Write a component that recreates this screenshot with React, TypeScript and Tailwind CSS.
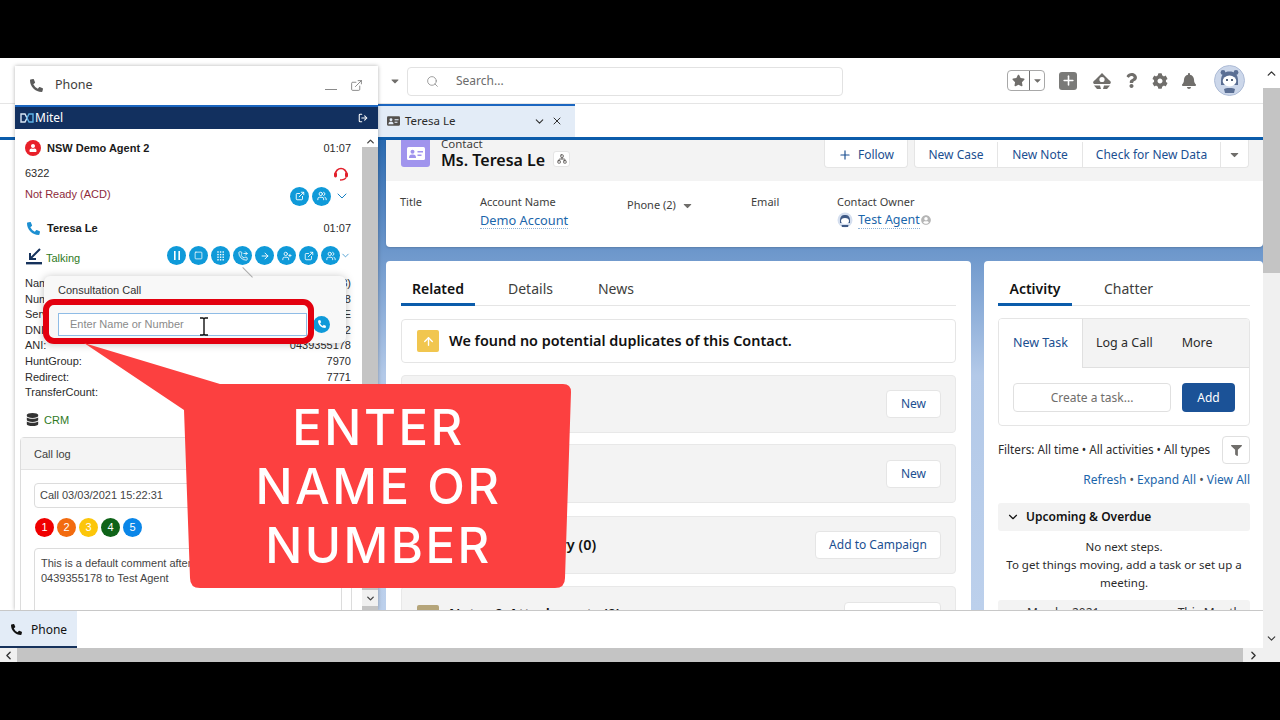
import React from 'react';
import {
  ChevronDown, ChevronUp, ChevronLeft, ChevronRight, ExternalLink, LogOut, Search, X, Plus,
  Square, PhoneForwarded, ArrowRight, UserPlus, Users, Network,
} from 'lucide-react';
import { FaPhoneAlt, FaDatabase, FaStar, FaQuestion, FaCog, FaBell, FaFilter, FaCaretDown, FaUserCircle, FaUser } from 'react-icons/fa';

const sf = "font-['Noto_Sans',sans-serif]";
const ar = "font-['Liberation_Sans',Arial,sans-serif]";

function RoundBtn({ children, size = 'w-[19px] h-[19px]' }: { children: React.ReactNode; size?: string }) {
  return <div className={`${size} rounded-full bg-[#0f9ad9] text-white flex items-center justify-center shrink-0`}>{children}</div>;
}

function PauseBars() {
  return (
    <svg width="8" height="9" viewBox="0 0 8 9" fill="#fff">
      <rect x="1" y="0" width="1.6" height="9" />
      <rect x="5.4" y="0" width="1.6" height="9" />
    </svg>
  );
}

function DialPad() {
  const dots: [number, number][] = [];
  for (let r = 0; r < 4; r++) for (let c = 0; c < 3; c++) dots.push([c * 2.6 + 1, r * 2.6 + 1]);
  return (
    <svg width="8" height="10" viewBox="0 0 8 10" fill="#fff">
      {dots.map(([x, y]) => <rect key={`${x}-${y}`} x={x - 0.7} y={y - 0.7} width="1.4" height="1.4" />)}
    </svg>
  );
}

function Headset() {
  return (
    <svg width="16" height="16" viewBox="0 0 16 16" fill="none">
      <path d="M2.5 9 A5.5 5.5 0 0 1 13.5 9" stroke="#e2202c" strokeWidth="1.6" />
      <rect x="1" y="7.5" width="3" height="5" rx="1.4" fill="#e2202c" />
      <rect x="12" y="7.5" width="3" height="5" rx="1.4" fill="#e2202c" />
      <path d="M13 12.5 C12 14.5 9.5 15 7 15" stroke="#e2202c" strokeWidth="1.5" />
    </svg>
  );
}

function MitelLogo() {
  return (
    <svg width="14" height="10" viewBox="0 0 14 10" fill="none">
      <path d="M1 1 L5 1 L7 5 L5 9 L1 9 Z" stroke="#d8e6f5" strokeWidth="1.4" />
      <path d="M13 1 L9 1 L7 5 L9 9 L13 9 Z" stroke="#5fb2e6" strokeWidth="1.4" />
    </svg>
  );
}

function IdCard({ w, h, bg, fg }: { w: number; h: number; bg: string; fg: string }) {
  return (
    <svg width={w} height={h} viewBox="0 0 18 13">
      <rect x="0" y="0" width="18" height="13" rx="1.5" fill={bg} />
      <circle cx="5.5" cy="4.8" r="2" fill={fg} />
      <path d="M2 11 C2 8 3.5 7.5 5.5 7.5 C7.5 7.5 9 8 9 11 Z" fill={fg} />
      <rect x="10.5" y="4" width="5.5" height="1.5" fill={fg} />
      <rect x="10.5" y="7.5" width="4" height="1.5" fill={fg} />
    </svg>
  );
}

function Avatar() {
  return (
    <svg width="31" height="31" viewBox="0 0 31 31">
      <circle cx="15.5" cy="15.5" r="15" fill="#ccd7ea" stroke="#aebcd6" />
      <circle cx="9" cy="7.5" r="2.4" fill="#5b6f94" />
      <circle cx="22" cy="7.5" r="2.4" fill="#5b6f94" />
      <path d="M7 16 C7 9 10.5 6.5 15.5 6.5 C20.5 6.5 24 9 24 16 L24 20 L7 20 Z" fill="#5b6f94" />
      <ellipse cx="15.5" cy="16" rx="6.8" ry="5.4" fill="#fff" />
      <circle cx="13" cy="15" r="1" fill="#1c2f4f" />
      <circle cx="18" cy="15" r="1" fill="#1c2f4f" />
      <path d="M10 24 C11 22.5 20 22.5 21 24 L20 28 L11 28 Z" fill="#5b6f94" />
    </svg>
  );
}

function Trailhead() {
  return (
    <svg width="20" height="18" viewBox="0 0 20 18" fill="#706e6b">
      <path d="M10 1 L17 8 C19 9 19.5 11 18 12 L2 12 C0.5 11 1 9 3 8 Z" />
      <circle cx="10" cy="7.5" r="2.6" fill="#fff" />
      <path d="M2 13.5 L8 13.5 L9 17 L5 17 Z M18 13.5 L12 13.5 L11 17 L15 17 Z" />
    </svg>
  );
}

function SmallAvatar() {
  return (
    <svg width="16" height="16" viewBox="0 0 16 16">
      <circle cx="8" cy="8" r="7.5" fill="#d5dfef" />
      <path d="M3 9 C3 4 5 3 8 3 C11 3 13 4 13 9 L13 11 L3 11 Z" fill="#3f5a86" />
      <ellipse cx="8" cy="9" rx="4" ry="3" fill="#fff" />
      <path d="M4.5 13 L11.5 13 L11 15 L5 15 Z" fill="#3f5a86" />
    </svg>
  );
}

function TalkingIcon() {
  return (
    <svg width="18" height="18" viewBox="0 0 18 18" fill="none">
      <path d="M15 1 L5 11 M5 5 L5 11 L11 11" stroke="#16325c" strokeWidth="2" />
      <rect x="1" y="14" width="16" height="2.4" fill="#16325c" />
    </svg>
  );
}

function PhonePanel() {
  const info = [
    ['Name:', 'Teresa Le (0439355178)'],
    ['Number:', '0439355178'],
    ['Service:', 'SERVICE'],
    ['DNIS:', '6322'],
    ['ANI:', '0439355178'],
    ['HuntGroup:', '7970'],
    ['Redirect:', '7771'],
    ['TransferCount:', ''],
  ];
  const ratings = [
    ['1', 'bg-[#f00000]'],
    ['2', 'bg-[#f26b0f]'],
    ['3', 'bg-[#fcc60a]'],
    ['4', 'bg-[#0f6318]'],
    ['5', 'bg-[#0a86e8]'],
  ];
  return (
    <div className={`absolute left-[15px] top-[8px] bottom-0 w-[363px] bg-white shadow-[0_0_4px_rgba(0,0,0,0.3)] flex flex-col ${ar}`}>
      <div className="h-[39px] shrink-0 flex items-center pl-[15px] pr-[15px]">
        <FaPhoneAlt className="text-[#5c5c5c] text-[13px]" />
        <span className={`ml-[12px] text-[12.5px] text-[#3e3e3c] ${sf}`}>Phone</span>
        <div className="ml-auto w-[12px] h-[1px] bg-[#8a8a8a] mt-[8px]" />
        <ExternalLink className="ml-[13px] text-[#5c5c5c]" size={13} strokeWidth={1.3} />
      </div>
      <div className="h-[24px] shrink-0 bg-[#12305f] border-t-2 border-[#1b66c0] flex items-center pl-[5px] pr-[10px]">
        <MitelLogo />
        <span className={`ml-[1px] text-white text-[12px] ${sf}`}>Mitel</span>
        <LogOut className="ml-auto text-white" size={10} strokeWidth={2.5} />
      </div>
      <div className="relative flex-1 flex min-h-0">
        <div className="flex-1 min-w-0 overflow-hidden pt-[7px] text-[11px] text-[#2b2b2b]">
          <div className="pl-[10px] pr-[11px]">
            <div className="h-[24px] flex items-center">
              <div className="w-[16px] h-[16px] rounded-full bg-[#e8202a] flex items-center justify-center text-white">
                <FaUser className="text-[8px]" />
              </div>
              <span className="ml-[6px] font-bold text-[#1a1a1a]">NSW Demo Agent 2</span>
              <span className="ml-auto">01:07</span>
            </div>
            <div className="mt-[4px] h-[18px] flex items-center">
              <span>6322</span>
              <span className="ml-auto mr-[2px]"><Headset /></span>
            </div>
            <div className="mt-[2px] h-[20px] flex items-center">
              <span className="text-[#8e2a3a]">Not Ready (ACD)</span>
              <div className="ml-auto flex items-center gap-[3px] mt-[4px]">
                <RoundBtn><ExternalLink size={10} strokeWidth={2.2} /></RoundBtn>
                <RoundBtn><Users size={10} strokeWidth={2.2} /></RoundBtn>
                <ChevronDown className="text-[#1580c4] mr-[1px]" size={16} strokeWidth={1.5} />
              </div>
            </div>
            <div className="mt-[12px] h-[24px] flex items-center">
              <FaPhoneAlt className="text-[#1d8fd1] text-[13px] ml-[2px]" />
              <span className="ml-[7px] font-bold text-[#1a1a1a]">Teresa Le</span>
              <span className="ml-auto">01:07</span>
            </div>
            <div className="mt-[6px] h-[22px] flex items-center">
              <TalkingIcon />
              <span className="ml-[3px] mt-[2px] text-[#2f7a1e]">Talking</span>
              <div className="ml-auto flex items-center gap-[3px] mb-[3px]">
                <RoundBtn><PauseBars /></RoundBtn>
                <RoundBtn><Square size={9} strokeWidth={2} /></RoundBtn>
                <RoundBtn><DialPad /></RoundBtn>
                <RoundBtn><PhoneForwarded size={10} strokeWidth={2} /></RoundBtn>
                <RoundBtn><ArrowRight size={10} strokeWidth={2.2} /></RoundBtn>
                <RoundBtn><UserPlus size={10} strokeWidth={2} /></RoundBtn>
                <RoundBtn><ExternalLink size={10} strokeWidth={2} /></RoundBtn>
                <RoundBtn><Users size={10} strokeWidth={2} /></RoundBtn>
                <ChevronDown className="text-[#1580c4] -ml-[3px]" size={11} strokeWidth={1.5} />
              </div>
            </div>
            <div className="mt-[8px]">
              {info.map(([k, v]) => (
                <div key={k} className="h-[15.6px] leading-[15.6px] flex justify-between">
                  <span>{k}</span>
                  <span>{v}</span>
                </div>
              ))}
            </div>
            <div className="mt-[9px] h-[20px] flex items-center">
              <FaDatabase className="text-[#333] text-[13px] ml-[1px]" />
              <span className="ml-[5px] text-[#2f7a1e]">CRM</span>
            </div>
          </div>
          <div className="mt-[7px] ml-[5px] mr-[10px] border border-[#dcdcdc] rounded-t-[4px]">
            <div className="h-[32px] bg-[#f4f4f4] border-b border-[#e2e2e2] pl-[13px] pt-[2px] flex items-center text-[#3e3e3c]">Call log</div>
            <div className="px-[13px] pt-[13px] bg-white">
              <div className="h-[25px] w-[250px] border border-[#dcdcdc] rounded-[4px] flex items-center pl-[5px] text-[#444]">Call 03/03/2021 15:22:31</div>
              <div className="mt-[10px] ml-[1px] flex gap-[3px]">
                {ratings.map(([n, c]) => (
                  <div key={n} className={`w-[19px] h-[19px] rounded-full ${c} text-white flex items-center justify-center`}>{n}</div>
                ))}
              </div>
              <div className="mt-[11px] h-[80px] mr-[-4px] border border-[#dcdcdc] rounded-[4px] pl-[6px] pt-[7px] leading-[15.5px] text-[#444]">
                This is a default comment after call from<br />0439355178 to Test Agent
              </div>
            </div>
          </div>
        </div>
        <div className="w-[16px] shrink-0 mt-[6px] flex flex-col bg-[#c4c4c4]">
          <div className="h-[12px] bg-white flex items-center justify-center"><ChevronUp size={11} strokeWidth={3} className="text-[#444]" /></div>
          <div className="flex-1" />
          <div className="h-[16px] mb-[4px] bg-[#f0f0f0] flex items-center justify-center"><ChevronDown size={11} strokeWidth={3} className="text-[#444]" /></div>
        </div>

        {/* consultation popup */}
        <div className="absolute left-[29px] top-[147px] w-[302px] h-[67px] bg-[#f8f8f8] rounded-[6px] shadow-[0_1px_8px_rgba(0,0,0,0.25)] pl-[14px] pt-[6px] text-[11px] text-[#333]">
          <div className="absolute left-[192px] -top-[6px] w-[14px] h-[14px] rotate-45 border-t border-[#aaaaaa]" />
          <div className="relative">Consultation Call</div>
          <div className="mt-[14px] flex items-center">
            <div className="w-[249px] h-[23px] bg-white border border-[#8fbce6] pl-[11px] flex items-center text-[#8a8a8a]">
              <span>Enter Name or Number</span>
            </div>
            <RoundBtn size="w-[17px] h-[17px] ml-[6px]"><FaPhoneAlt className="text-[8px]" /></RoundBtn>
          </div>
        </div>
      </div>
    </div>
  );
}

function HeaderBar() {
  return (
    <div className={`h-[46px] shrink-0 bg-white border-b border-[#e5e5e5] flex items-center ${sf}`}>
      <FaCaretDown className="ml-[389px] text-[#706e6b] text-[12px]" />
      <div className="ml-[6px] w-[436px] h-[29px] border border-[#e2e2e2] rounded-[4px] flex items-center pl-[18px] text-[12px] text-[#6b6b6b] mt-[1px]">
        <Search size={13} strokeWidth={1.5} className="text-[#8a8a8a]" />
        <span className="ml-[17px]">Search...</span>
      </div>
      <div className="ml-[164px] w-[38px] h-[21px] border border-[#a8a8a8] rounded-[4px] flex items-center">
        <div className="w-[22px] flex justify-center border-r border-[#707070] h-full items-center"><FaStar className="text-[#706e6b] text-[13px]" /></div>
        <FaCaretDown className="ml-[2px] text-[#706e6b] text-[11px]" />
      </div>
      <div className="ml-[14px] w-[18px] h-[18px] rounded-[3px] bg-[#7a7a78] flex items-center justify-center">
        <Plus size={15} strokeWidth={2.5} className="text-white" />
      </div>
      <div className="ml-[15px] flex"><Trailhead /></div>
      <FaQuestion className="ml-[12px] text-[#706e6b] text-[15px]" />
      <FaCog className="ml-[13px] text-[#706e6b] text-[16px]" />
      <FaBell className="ml-[13px] text-[#706e6b] text-[16px]" />
      <div className="ml-[17px]"><Avatar /></div>
    </div>
  );
}

function TabRow() {
  return (
    <div className={`h-[34px] shrink-0 bg-white flex pl-[378px] ${sf}`}>
      <div className="w-[197px] bg-[#e3ecf7] border-t-2 border-[#1b66c0] flex items-center pl-[9px] pb-[2px] text-[11.5px] text-[#2b2b2b]">
        <IdCard w={13} h={10} bg="#54514e" fg="#e3ecf7" />
        <span className="ml-[5px]">Teresa Le</span>
        <ChevronDown size={13} strokeWidth={2} className="ml-auto text-[#333]" />
        <X size={12} strokeWidth={2} className="ml-[5px] mr-[12px] text-[#333]" />
      </div>
    </div>
  );
}

function Highlights() {
  const fieldLabel = 'text-[11px] text-[#3e3e3c]';
  const actions: [string, string][] = [['New Case', 'w-[83px]'], ['New Note', 'w-[85px]'], ['Check for New Data', 'w-[138px]']];
  return (
    <div className="h-[107px] shrink-0 mr-0 bg-white rounded-b-[4px] overflow-hidden shadow-[0_1px_2px_rgba(0,0,0,0.15)]">
      <div className="h-[41px] bg-[#f3f3f3] flex items-start pl-[15px]">
        <div className="w-[29px] h-[27px] rounded-b-[3px] bg-[#a094ed] flex items-center justify-center">
          <IdCard w={18} h={13} bg="#ffffff" fg="#a094ed" />
        </div>
        <div className="ml-[11px] -mt-[3px]">
          <div className="text-[11.5px] leading-[14px] text-[#3e3e3c]">Contact</div>
          <div className="text-[16px] leading-[19px] font-semibold text-[#111]">Ms. Teresa Le</div>
        </div>
        <div className="ml-[8px] mt-[11px] w-[17px] h-[16px] bg-white border border-[#e5e5e5] rounded-[3px] flex items-center justify-center">
          <Network size={10} className="text-[#54514e]" />
        </div>
        <div className="ml-auto mr-[14px] flex text-[12px] text-[#1b4f91]">
          <div className="w-[84px] h-[28px] pt-[2px] bg-white rounded-b-[4px] border border-[#e5e5e5] border-t-0 flex items-center justify-center gap-[6px]">
            <Plus size={14} strokeWidth={2} /><span>Follow</span>
          </div>
          <div className="ml-[6px] flex bg-white rounded-b-[4px] border border-[#e5e5e5] border-t-0 h-[28px] pt-[2px]">
            {actions.map(([a, w]) => (
              <div key={a} className={`${w} flex items-center justify-center border-r border-[#e5e5e5]`}>{a}</div>
            ))}
            <div className="w-[27px] flex items-center justify-center"><FaCaretDown className="text-[#706e6b] text-[13px]" /></div>
          </div>
        </div>
      </div>
      <div className="flex pl-[14px] pt-[13px]">
        <div className={`w-[80px] ${fieldLabel}`}>Title</div>
        <div className="w-[147px]">
          <div className={fieldLabel}>Account Name</div>
          <div className="mt-[1px] w-fit text-[12.8px] leading-[16px] text-[#1b66ab] border-b border-dotted border-[#8fb3d6]">Demo Account</div>
        </div>
        <div className={`w-[124px] mt-[3px] flex items-start gap-[5px] ${fieldLabel}`}>
          <span>Phone (2)</span><FaCaretDown className="text-[#706e6b] text-[13px] mt-[2px]" />
        </div>
        <div className={`w-[86px] ${fieldLabel}`}>Email</div>
        <div>
          <div className={fieldLabel}>Contact Owner</div>
          <div className="mt-[1px] flex items-center">
            <SmallAvatar />
            <span className="ml-[5px] text-[12.5px] leading-[16px] text-[#1b66ab] border-b border-dotted border-[#8fb3d6]">Test Agent</span>
            <FaUserCircle className="ml-[1px] text-[#b5b5b5] text-[10px]" />
          </div>
        </div>
      </div>
    </div>
  );
}

function RelatedRow({ h, title, action, btnW, className = '' }: { h: string; title?: string; action: string; btnW: string; className?: string }) {
  return (
    <div className={`${h} shrink-0 bg-[#f3f3f3] border border-[#e8e8e8] rounded-[4px] flex items-center pl-[15px] pr-[14px] ${className}`}>
      {title && <span className="ml-[32px] text-[14.4px] font-semibold text-[#111]">{title}</span>}
      <div className={`ml-auto ${btnW} h-[28px] bg-white border border-[#e5e5e5] rounded-[4px] flex items-center justify-center text-[12px] text-[#1b4f91]`}>{action}</div>
    </div>
  );
}

function RelatedCard() {
  return (
    <div className="w-[585px] shrink-0 bg-white rounded-t-[4px] pt-[14px] px-[15px] flex flex-col overflow-hidden">
      <div className="h-[31px] shrink-0 border-b border-[#e5e5e5] flex text-[14px] text-[#3e3e3c]">
        <div className="w-[74px] h-[31px] border-b-[3px] border-[#0b5cab] text-center font-semibold text-[#111] leading-[28px]">Related</div>
        <div className="ml-[33px] leading-[28px]">Details</div>
        <div className="ml-[45px] leading-[28px]">News</div>
      </div>
      <div className="mt-[13px] h-[44px] shrink-0 border border-[#e5e5e5] rounded-[4px] flex items-center pl-[15px]">
        <div className="w-[22px] h-[22px] rounded-[2px] bg-[#f1c64f] flex items-center justify-center">
          <ArrowRight size={13} strokeWidth={2.5} className="text-white -rotate-90" />
        </div>
        <span className="ml-[10px] text-[14.4px] font-semibold text-[#111]">We found no potential duplicates of this Contact.</span>
      </div>
      <RelatedRow h="h-[58px]" action="New" btnW="w-[55px]" className="mt-[12px]" />
      <RelatedRow h="h-[59px]" action="New" btnW="w-[55px]" className="mt-[11px]" />
      <RelatedRow h="h-[58px]" title="Campaign History (0)" action="Add to Campaign" btnW="w-[126px]" className="mt-[13px]" />
      <div className="mt-[12px] h-[60px] shrink-0 bg-[#f3f3f3] border border-[#e8e8e8] rounded-[4px] flex items-start pl-[15px] pr-[14px] pt-[15px]">
        <div className="mt-[3px] w-[22px] h-[22px] rounded-[2px] bg-[#b5a57a]" />
        <span className="ml-[10px] mt-[1px] text-[14.4px] font-semibold text-[#111]">Notes &amp; Attachments (0)</span>
        <div className="ml-auto w-[97px] h-[28px] bg-white border border-[#e5e5e5] rounded-[4px]" />
      </div>
    </div>
  );
}

function ActivityCard() {
  return (
    <div className="ml-[13px] flex-1 bg-white rounded-t-[4px] pt-[14px] pl-[14px] pr-[13px] flex flex-col overflow-hidden text-[12px] text-[#2b2b2b]">
      <div className="h-[31px] shrink-0 border-b border-[#e5e5e5] flex text-[14px] text-[#3e3e3c]">
        <div className="w-[74px] h-[31px] border-b-[3px] border-[#0b5cab] text-center font-semibold text-[#111] leading-[28px]">Activity</div>
        <div className="ml-[32px] leading-[28px]">Chatter</div>
      </div>
      <div className="mt-[12px] h-[108px] shrink-0 border border-[#e5e5e5] rounded-[4px] overflow-hidden">
        <div className="h-[49px] flex bg-[#f3f3f3] text-[12.5px]">
          <div className="w-[84px] bg-white border-r border-[#e0e0e0] flex items-center justify-center text-[#1b4f91]">New Task</div>
          <div className="flex-1 border-b border-[#e0e0e0] flex items-center pl-[13px]">
            <span>Log a Call</span>
            <span className="ml-[29px]">More</span>
          </div>
        </div>
        <div className="flex pl-[14px] pt-[15px]">
          <div className="w-[158px] h-[29px] border border-[#e0e0e0] rounded-[4px] flex items-center justify-center text-[#706e6b]">Create a task...</div>
          <div className="ml-[11px] w-[53px] h-[29px] rounded-[4px] bg-[#1b5297] text-white flex items-center justify-center">Add</div>
        </div>
      </div>
      <div className="mt-[10px] h-[28px] shrink-0 flex items-center justify-between">
        <span className="text-[11.7px]">Filters: All time • All activities • All types</span>
        <div className="w-[28px] h-[28px] border border-[#e0e0e0] rounded-[4px] flex items-center justify-center"><FaFilter className="text-[#706e6b] text-[11px]" /></div>
      </div>
      <div className="mt-[6px] shrink-0 text-right text-[#1b66ab] leading-[20px]">Refresh <span className="text-[#555]">•</span> Expand All <span className="text-[#555]">•</span> View All</div>
      <div className="mt-[13px] h-[28px] shrink-0 bg-[#f3f3f3] rounded-[3px] flex items-center pl-[8px] font-semibold text-[#111]">
        <ChevronDown size={14} strokeWidth={2} />
        <span className="ml-[6px]">Upcoming &amp; Overdue</span>
      </div>
      <div className="mt-[7px] shrink-0 text-center leading-[18px] text-[11.5px]">
        No next steps.<br />To get things moving, add a task or set up a<br />meeting.
      </div>
      <div className="mt-[8px] h-[28px] shrink-0 bg-[#f3f3f3] rounded-[3px] flex justify-between pl-[29px] pr-[9px] pt-[4px] text-[#333]">
        <span>March · 2021</span>
        <span>This Month</span>
      </div>
    </div>
  );
}

export default function App() {
  return (
    <div className="relative w-[1280px] h-[720px] bg-black overflow-hidden">
      <div className="h-[58px]" />
      <div className="h-[604px] flex flex-col bg-white">
        <div className="h-[590px] flex">
          <div className="w-[1263px] flex flex-col">
            <div className="relative h-[552px] flex flex-col overflow-hidden">
              <HeaderBar />
              <TabRow />
              <div className="flex-1 min-h-0 flex border-t-[3px] border-[#0b5cab] -mt-[1px]">
                <div className="w-[378px] shrink-0 bg-white" />
                <div className={`flex-1 min-w-0 flex flex-col pl-[8px] bg-gradient-to-b from-[#2a6ab0] via-[#b3c9e8] to-[#bcd0ec] ${sf}`}>
                  <Highlights />
                  <div className="mt-[14px] flex-1 min-h-0 flex">
                    <RelatedCard />
                    <ActivityCard />
                  </div>
                </div>
              </div>
              <PhonePanel />
            </div>
            <div className={`h-[38px] border-t border-[#c8c8c8] bg-white flex ${sf}`}>
              <div className="w-[77px] bg-[#e3ecf7] border-b-2 border-[#16325c] flex items-center pl-[11px] pt-[2px] text-[12px] text-[#111]">
                <FaPhoneAlt className="text-[11px]" />
                <span className="ml-[9px]">Phone</span>
              </div>
            </div>
          </div>
          <div className="w-[17px] flex flex-col bg-[#f0f0f0]">
            <div className="h-[30px] bg-white flex items-center justify-center"><ChevronUp size={13} strokeWidth={2.5} className="text-[#333]" /></div>
            <div className="h-[185px] bg-[#c4c4c4]" />
            <div className="flex-1 flex items-end justify-center pb-[3px]"><ChevronDown size={13} strokeWidth={2} className="text-[#333]" /></div>
          </div>
        </div>
        <div className="h-[14px] flex bg-[#f0f0f0]">
          <div className="w-[17px] flex items-center justify-center"><ChevronLeft size={13} strokeWidth={2.5} className="text-[#333]" /></div>
          <div className="w-[1226px] bg-[#c4c4c4]" />
          <div className="w-[20px] flex items-center justify-center"><ChevronRight size={13} strokeWidth={2.5} className="text-[#333]" /></div>
        </div>
      </div>

      {/* red highlight around the input */}
      <div className="absolute left-[43px] top-[299px] w-[271px] h-[45px] border-[6px] border-[#e3000f] rounded-[11px]" />
      {/* callout */}
      <div className="absolute left-[84px] top-[342px] w-[487px] h-[246px]">
        <svg className="absolute inset-0" width="487" height="246" viewBox="0 0 487 246">
          <path d="M0 1 L136 42 L479 42 Q487 42 487 50 L481 236 Q481 246 471 246 L116 246 Q106 246 106 236 L100 68 Z" fill="#fc4040" />
        </svg>
        <div className="absolute left-[100px] right-0 top-[42px] bottom-0 pl-[2px] flex items-center justify-center text-center text-white text-[49px] leading-[59px] font-medium font-['Inter',sans-serif] tracking-[2.5px]">
          ENTER<br />NAME OR<br />NUMBER
        </div>
      </div>
      {/* mouse cursor */}
      <svg className="absolute left-[199px] top-[317px]" width="10" height="19" viewBox="0 0 10 19" fill="none">
        <path d="M1 1 L4 1 L5 2 L6 1 L9 1 M5 2 L5 17 M1 18 L4 18 L5 17 L6 18 L9 18" stroke="#111" strokeWidth="1.4" />
      </svg>
    </div>
  );
}
